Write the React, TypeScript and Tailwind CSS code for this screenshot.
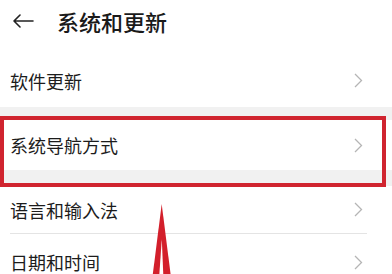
import React from "react";

function Chevron() {
  return (
    <svg width="9" height="15" viewBox="0 0 9 15" className="shrink-0">
      <polyline points="1,1 7.5,7.5 1,14" fill="none" stroke="#b5b5b5" strokeWidth="1.3" strokeLinejoin="miter" />
    </svg>
  );
}

function Row({ label, h }: { label: string; h: string }) {
  return (
    <div className={`flex items-center justify-between pl-[10px] pr-[29px] bg-white ${h}`}>
      <span className="text-[18px] leading-none text-[#1c1c1c]">{label}</span>
      <Chevron />
    </div>
  );
}

export default function App() {
  return (
    <div
      className="relative w-[392px] h-[274px] overflow-hidden bg-white"
      style={{ fontFamily: '"Noto Sans CJK SC", "Noto Sans", sans-serif' }}
    >
      <div className="flex items-center h-[42px]">
        <svg width="22" height="14" viewBox="0 0 22 14" className="ml-[12px]">
          <path d="M21 7 H2 M8 1 L2 7 L8 13" fill="none" stroke="#222" strokeWidth="1.6" strokeLinecap="round" strokeLinejoin="round" />
        </svg>
        <span className="ml-[23px] text-[22px] leading-none font-medium text-[#1a1a1a]">系统和更新</span>
      </div>
      <div className="pt-[12px]">
        <Row label="软件更新" h="h-[53px]" />
        <div className="h-[13px] bg-[#f1f1f1]" />
        <Row label="系统导航方式" h="h-[50px]" />
        <div className="h-[16px] bg-[#f1f1f1]" />
        <Row label="语言和输入法" h="h-[47px]" />
        <div className="h-px bg-[#e4e4e4] ml-[10px] mr-[25px]" />
        <Row label="日期和时间" h="h-[56px]" />
      </div>
      <div className="absolute left-0 top-[116px] w-[386px] h-[71px] border-4 border-[#d0242f]" />
      <svg className="absolute left-[150px] top-[203px]" width="24" height="71" viewBox="0 0 24 71">
        <polygon points="2.7,72 11.7,1 20.7,72" fill="#d31f2b" />
        <polygon points="9.3,72 11.8,36 13.3,72" fill="#ffffff" />
      </svg>
    </div>
  );
}
